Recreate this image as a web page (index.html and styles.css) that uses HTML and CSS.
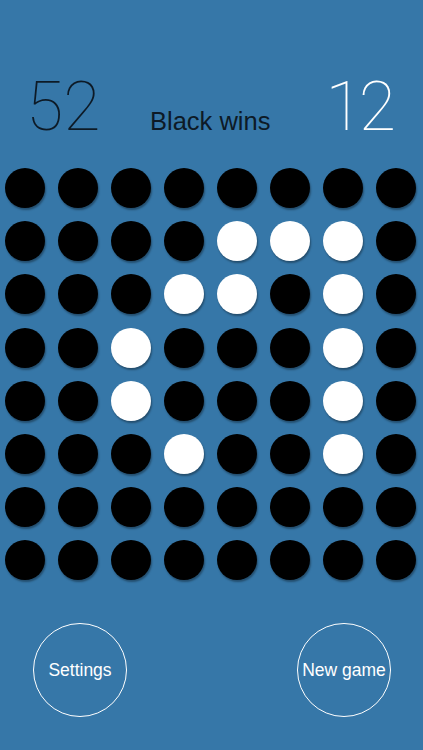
FILE: index.html
```html
<!DOCTYPE html>
<html>
<head>
<meta charset="utf-8">
<link rel="stylesheet" href="styles.css">
</head>
<body>
<div class="app">
  <div class="scores">
    <span class="score black">52</span>
    <span class="status">Black wins</span>
    <span class="score white">12</span>
  </div>
  <div class="board">
    <div class="d b"></div><div class="d b"></div><div class="d b"></div><div class="d b"></div><div class="d b"></div><div class="d b"></div><div class="d b"></div><div class="d b"></div>
    <div class="d b"></div><div class="d b"></div><div class="d b"></div><div class="d b"></div><div class="d w"></div><div class="d w"></div><div class="d w"></div><div class="d b"></div>
    <div class="d b"></div><div class="d b"></div><div class="d b"></div><div class="d w"></div><div class="d w"></div><div class="d b"></div><div class="d w"></div><div class="d b"></div>
    <div class="d b"></div><div class="d b"></div><div class="d w"></div><div class="d b"></div><div class="d b"></div><div class="d b"></div><div class="d w"></div><div class="d b"></div>
    <div class="d b"></div><div class="d b"></div><div class="d w"></div><div class="d b"></div><div class="d b"></div><div class="d b"></div><div class="d w"></div><div class="d b"></div>
    <div class="d b"></div><div class="d b"></div><div class="d b"></div><div class="d w"></div><div class="d b"></div><div class="d b"></div><div class="d w"></div><div class="d b"></div>
    <div class="d b"></div><div class="d b"></div><div class="d b"></div><div class="d b"></div><div class="d b"></div><div class="d b"></div><div class="d b"></div><div class="d b"></div>
    <div class="d b"></div><div class="d b"></div><div class="d b"></div><div class="d b"></div><div class="d b"></div><div class="d b"></div><div class="d b"></div><div class="d b"></div>
  </div>
  <div class="buttons">
    <button class="circle-btn">Settings</button>
    <button class="circle-btn">New game</button>
  </div>
</div>
</body>
</html>
```
FILE: styles.css
```css
html, body {
  margin: 0;
  padding: 0;
  background: #3677a8;
}
.app {
  width: 423px;
  height: 750px;
  display: flex;
  flex-direction: column;
  font-family: "Liberation Sans", Arial, sans-serif;
}
.scores {
  height: 168px;
  box-sizing: border-box;
  display: flex;
  align-items: baseline;
  padding: 73px 0 0 26px;
}
.score {
  font-family: Roboto, "Liberation Sans", sans-serif;
  font-weight: 100;
  font-size: 68px;
  line-height: 68px;
}
.score.black {
  color: #0d1a26;
  width: 124px;
}
.score.white {
  color: #ffffff;
  margin-left: 55px;
  letter-spacing: -4px;
}
.status {
  font-family: "Liberation Sans", Arial, sans-serif;
  font-size: 25.5px;
  color: #0d1a26;
}
.board {
  display: grid;
  grid-template-columns: repeat(8, 40px);
  grid-auto-rows: 40px;
  column-gap: 13px;
  row-gap: 13.2px;
  padding-left: 5px;
}
.d {
  border-radius: 50%;
  box-shadow: 1px 2px 2px rgba(0, 0, 0, 0.35);
}
.d.b { background: #000; }
.d.w { background: #fff; }
.buttons {
  display: flex;
  justify-content: space-between;
  padding: 43px 32px 0 33px;
}
.circle-btn {
  width: 94px;
  height: 94px;
  border-radius: 50%;
  border: 1.5px solid #fff;
  background: transparent;
  color: #fff;
  font-family: "Liberation Sans", Arial, sans-serif;
  font-size: 17.5px;
  padding: 0;
  white-space: nowrap;
}
```
